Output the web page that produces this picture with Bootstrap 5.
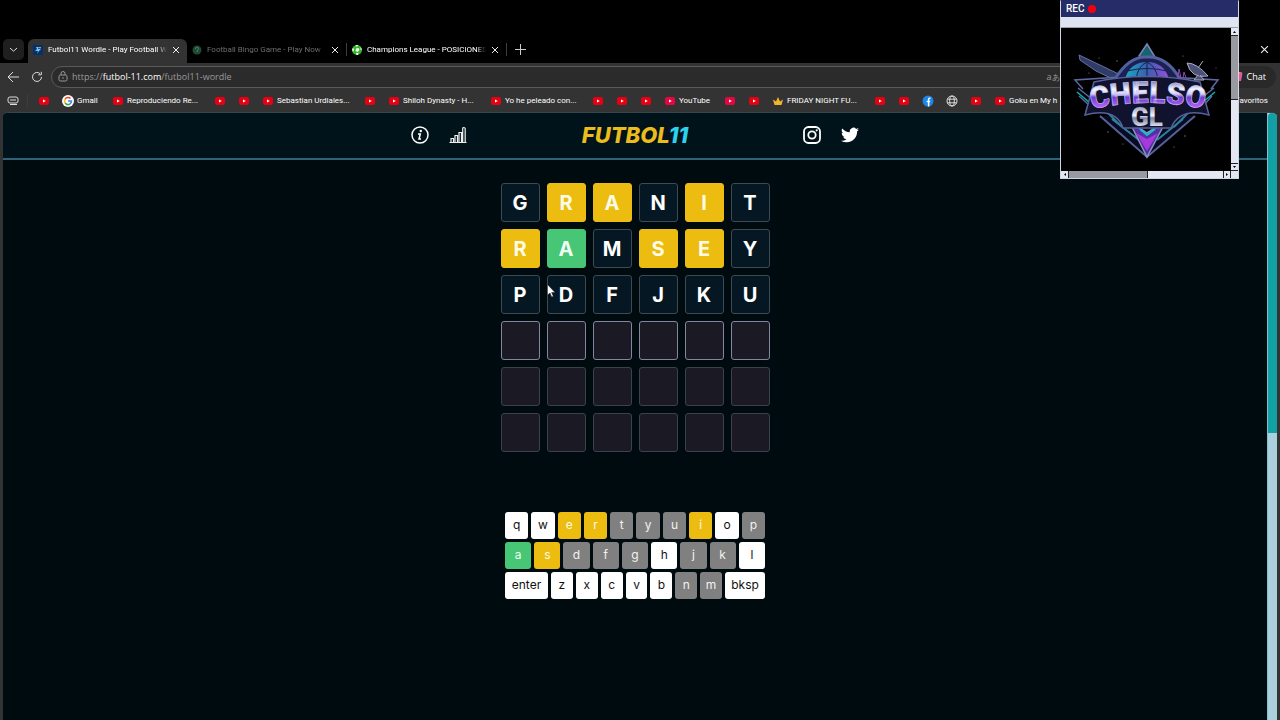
<!DOCTYPE html>
<html lang="en">
<head>
<meta charset="utf-8">
<meta name="viewport" content="width=device-width, initial-scale=1">
<title>Futbol11 Wordle - Play Football Wordle</title>
<link rel="stylesheet" href="https://cdn.jsdelivr.net/npm/bootstrap@5.3.0/dist/css/bootstrap.min.css">
<style>
  body { background: #333; font-family: Roboto, "Open Sans", sans-serif; font-size: 8px; line-height: 14px; color: #fff; }
  svg { display: block; flex: none; }
  a { color: inherit; text-decoration: none; }
  button { color: inherit; }
  .bare { background: none; border: 0; padding: 0; }

  /* browser chrome */
  .tabstrip { background: #000; padding: 39px 11px 0 3px; height: 63px; }
  .tabmenu { width: 21px; height: 21px; border-radius: 5px; background: #1f1f1f; }
  .tab { width: 159px; height: 24px; padding: 0 7px 2px 5px; gap: 5px; }
  .tab-on { background: #333; border-radius: 6px 6px 0 0; }
  .faded .tab-title { color: #6e6e6e; }
  .tab-title { flex: 1 1 0; min-width: 0; overflow: hidden; white-space: nowrap; -webkit-mask-image: linear-gradient(90deg, #000 92%, transparent); mask-image: linear-gradient(90deg, #000 92%, transparent); }
  .split { width: 1px; height: 13px; background: #3d3d3d; }
  .toolbar { height: 27px; padding: 0 4px 0 7px; gap: 12px; }
  .urlbox { height: 22px; border: 1px solid #5a5a5a; border-radius: 11px; background: #2b2b2b; padding: 0 157px 0 6px; gap: 4px; color: #9a9a9a; font-family: "Open Sans", sans-serif; font-size: 9px; margin-left: -4px; }
  .urlbox b { font-weight: 400; color: #fff; }
  .chat { height: 22px; border-radius: 11px; background: #292929; padding: 0 10px 0 8px; gap: 4px; font-family: "Open Sans", sans-serif; font-size: 9px; margin-left: -6px; }
  .marks { height: 22px; padding: 0 12px 1px 7px; white-space: nowrap; }
  .marks a { height: 20px; padding: 0 6px; gap: 3px; display: flex; align-items: center; flex: none; }
  .marks a.named { width: 102px; padding-right: 0; }
  .marks a.w-gmail { width: 50px; padding-right: 0; }
  .marks a.w-tube { width: 60px; padding-right: 0; }

  /* page */
  .viewport { min-height: 608px; margin: 0 3px; border: 1px solid #39464b; border-width: 1px 0 0; border-radius: 5px 5px 0 0; overflow: hidden; background: #000b10; }
  .site { font-family: Inter, "Open Sans", sans-serif; }
  .topbar { background: #00131b; border-bottom: 2px solid #2f6378; height: 47px; padding-bottom: 2px; }
  .topbar-in { width: 100%; max-width: 448px; }
  .brandname { font: italic 800 22px/30px Inter, "Open Sans", sans-serif; color: #ebbc1c; margin: 0; }
  .brandname span { color: #2bd3ee; }
  .icons { gap: 20px; }
  .scroll { width: 10px; background: #a9d0dc; border-left: 1px solid #7fc4cb; }
  .scroll-thumb { height: 320px; background: #12a0a5; border-radius: 4px 4px 0 0; }

  .board { display: grid; grid-template-columns: repeat(6, 39px); grid-auto-rows: 39px; gap: 7px; margin-top: 23px; }
  .tile { display: flex; align-items: center; justify-content: center; border: 1px solid #3d4a54; border-radius: 3px; background: #051722; color: #fff; font-size: 20px; font-weight: 700; line-height: 24px; }
  .tile.near, .pad .near { background: #ecbc10; border-color: #ecbc10; color: #fffbe6; }
  .tile.hit, .pad .hit { background: #47c675; border-color: #47c675; color: #f0fff4; }
  .tile.now { background: #1b1a24; border-color: #84869f; }
  .tile.later { background: #1b1a24; border-color: #3a424c; }

  .pad { width: 260px; margin-top: 60px; gap: 3px; }
  .keys { gap: 3px; }
  .keys button { flex: 1 1 0; min-width: 0; height: 27px; padding: 0 0 2px; border: 0; border-radius: 3px; background: #fff; color: #111; font-size: 12px; line-height: 18px; }
  .keys .miss { background: #808080; color: #f2f2f2; }
  .keys .k-enter { flex: 0 0 43px; }
  .keys .k-bksp { flex: 0 0 40px; }

  /* floating windows */
  .rec { position: absolute; top: 0; right: 41px; width: 179px; background: #000; border: 1px solid #cfd5e2; border-top-color: #252c68; }
  .rec-title { height: 16px; background: #252c68; padding-left: 5px; gap: 4px; font: 500 10px/14px Roboto, sans-serif; color: #fff; }
  .rec-dot { width: 8px; height: 8px; border-radius: 50%; background: #f10010; }
  .rec-bar { height: 11px; background: #dfe4f0; border-bottom: 1px solid #9aa0ae; }
  .rec-v { width: 7px; background: #e3e7f1; }
  .rec-v i, .rec-h i { background: #999aa1; display: block; }
  .rec-v i { height: 64px; border-bottom: 1px solid #222; }
  .rec-h { height: 7px; background: #e3e7f1; }
  .rec-h i { width: 79px; border-right: 1px solid #222; }
  .pointer { position: absolute; left: 46px; top: 101px; }
</style>
</head>
<body class="d-flex flex-column min-vh-100 position-relative">

<svg width="0" height="0" class="position-absolute" aria-hidden="true">
  <symbol id="yt" viewBox="0 0 12 12"><rect x="1" y="2" width="10" height="8" rx="2" fill="#e60012"/><path d="M5 4.400 7.800 6 5 7.600z" fill="#fff"/></symbol>
  <symbol id="ytm" viewBox="0 0 12 12"><rect x="1" y="2" width="10" height="8" rx="2" fill="#e4063f"/><path d="M5 4.400 7.800 6 5 7.600z" fill="#fff"/></symbol>
  <symbol id="x" viewBox="0 0 8 8"><path d="M1 1 7 7M7 1 1 7" stroke="#eee" stroke-width="1" fill="none"/></symbol>
</svg>

<header>
  <div class="tabstrip d-flex">
    <button class="bare tabmenu d-flex align-items-center justify-content-center me-1" aria-label="Tab menu"><svg width="9" height="9" viewBox="0 0 9 9"><path d="M1 3 4.500 6.200 8 3" fill="none" stroke="#ddd"/></svg></button>
    <div class="tab tab-on d-flex align-items-center">
      <svg width="10" height="10" viewBox="0 0 10 10"><rect width="10" height="10" fill="#07306b"/><path d="M3 2h3L5 4h3L6 6 4 9 5 6H2l2-2z" fill="#6ec6f2"/><path d="M6 2h2L7 4z" fill="#f3c92b"/></svg>
      <span class="tab-title">Futbol11 Wordle - Play Football W</span>
      <button class="bare" aria-label="Close tab"><svg width="8" height="8"><use href="#x"/></svg></button>
    </div>
    <div class="tab faded d-flex align-items-center">
      <svg width="10" height="10" viewBox="0 0 10 10"><circle cx="5" cy="5" r="4.500" fill="#1d4a30"/><path d="M3.500 4a1.500 1.500 0 1 1 2 1.300L5 7" stroke="#5c8069" fill="none"/></svg>
      <span class="tab-title">Football Bingo Game - Play Now</span>
      <button class="bare" aria-label="Close tab"><svg width="8" height="8"><use href="#x"/></svg></button>
    </div>
    <span class="split mt-1"></span>
    <div class="tab d-flex align-items-center">
      <svg width="10" height="10" viewBox="0 0 10 10"><circle cx="5" cy="5" r="5" fill="#35b52b"/><path d="M4 3.500 6.500 3 7.500 5 5.500 7 3.500 6zM4 0l2 0-.5 1.500-2 0zM0 4l1.500-1 .5 2-1 2zM8.500 2 10 4.500 8.500 5zM4 8l2.500 0L6 10 4.500 10z" fill="#f4fff2"/></svg>
      <span class="tab-title">Champions League - POSICIONES,</span>
      <button class="bare" aria-label="Close tab"><svg width="8" height="8"><use href="#x"/></svg></button>
    </div>
    <span class="split mt-1"></span>
    <button class="bare ms-2 pb-1" aria-label="New tab"><svg width="11" height="11" viewBox="0 0 11 11"><path d="M5.500 0v11M0 5.500h11" stroke="#ccc"/></svg></button>
    <button class="bare ms-auto pb-1" aria-label="Close window"><svg width="9" height="9"><use href="#x"/></svg></button>
  </div>

  <div class="toolbar d-flex align-items-center">
    <button class="bare" aria-label="Back"><svg width="12" height="12" viewBox="0 0 12 12"><path d="M6 1 1 6l5 5M1 6h11" fill="none" stroke="#ddd"/></svg></button>
    <button class="bare" aria-label="Reload"><svg width="12" height="12" viewBox="0 0 12 12"><path d="M10.500 6A4.500 4.500 0 1 1 9 2.600M10.300.8v3H7.300" fill="none" stroke="#ddd"/></svg></button>
    <div class="urlbox d-flex align-items-center flex-grow-1">
      <svg width="10" height="11" viewBox="0 0 10 11"><rect x="1" y="4" width="8" height="6" rx="1.500" fill="none" stroke="#999"/><path d="M3 4V2.500a2 2 0 0 1 4 0V4" fill="none" stroke="#999"/><circle cx="5" cy="7" r=".8" fill="#999"/></svg>
      <a href="#" class="flex-grow-1">https://<b>futbol-11.com</b>/futbol11-wordle</a>
      <span>a<small>あ</small></span>
    </div>
    <button class="bare chat d-flex align-items-center">
      <svg width="11" height="11" viewBox="0 0 11 11"><path d="M3 1h3L4 10H1Q0 10 1 6z" fill="#2b8df0"/><path d="M6 1h3q2 0 1 4L9 10H5z" fill="#e05a9b"/><path d="M4 5 6 1l2 0-3 9H3z" fill="#f49a4b"/></svg>Chat</button>
  </div>

  <nav class="marks d-flex align-items-center overflow-hidden" aria-label="Favorites">
    <svg width="12" height="10" viewBox="0 0 12 10"><rect x="1" y="1" width="10" height="6" rx="2" fill="none" stroke="#ddd"/><path d="M3 4h6M3 8.500h7" stroke="#ddd"/></svg>
    <span class="split ms-2 me-1"></span>
    <a href="#" aria-label="Video"><svg width="12" height="12"><use href="#yt"/></svg></a>
    <a href="#" class="w-gmail"><svg width="12" height="12" viewBox="0 0 12 12"><circle cx="6" cy="6" r="6" fill="#fff"/><g fill="none" stroke-width="1.600"><path d="M3.200 4A3.500 3.500 0 0 1 8.500 3.500" stroke="#ea4335"/><path d="M3.200 4a3.500 3.500 0 0 0 0 4" stroke="#fbbc05"/><path d="M3.200 8A3.500 3.500 0 0 0 8 8.900" stroke="#34a853"/><path d="M6 6h3.500Q9.500 8 8 8.900" stroke="#4285f4"/></g></svg>Gmail</a>
    <a href="#" class="named"><svg width="12" height="12"><use href="#yt"/></svg>Reproduciendo Re...</a>
    <a href="#" aria-label="Video"><svg width="12" height="12"><use href="#yt"/></svg></a>
    <a href="#" aria-label="Video"><svg width="12" height="12"><use href="#yt"/></svg></a>
    <a href="#" class="named"><svg width="12" height="12"><use href="#yt"/></svg>Sebastian Urdiales...</a>
    <a href="#" aria-label="Video"><svg width="12" height="12"><use href="#yt"/></svg></a>
    <a href="#" class="named"><svg width="12" height="12"><use href="#yt"/></svg>Shiloh Dynasty - H...</a>
    <a href="#" class="named"><svg width="12" height="12"><use href="#yt"/></svg>Yo he peleado con...</a>
    <a href="#" aria-label="Video"><svg width="12" height="12"><use href="#yt"/></svg></a>
    <a href="#" aria-label="Video"><svg width="12" height="12"><use href="#yt"/></svg></a>
    <a href="#" aria-label="Video"><svg width="12" height="12"><use href="#yt"/></svg></a>
    <a href="#" class="w-tube"><svg width="12" height="12"><use href="#ytm"/></svg>YouTube</a>
    <a href="#" aria-label="Video"><svg width="12" height="12"><use href="#ytm"/></svg></a>
    <a href="#" aria-label="Video"><svg width="12" height="12"><use href="#yt"/></svg></a>
    <a href="#" class="named"><svg width="12" height="12" viewBox="0 0 12 12"><path d="M1 4.500 4 6.500 6 2l2 4.500 3-2L9.500 10h-7z" fill="#efb52c"/></svg>FRIDAY NIGHT FU...</a>
    <a href="#" aria-label="Video"><svg width="12" height="12"><use href="#yt"/></svg></a>
    <a href="#" aria-label="Video"><svg width="12" height="12"><use href="#yt"/></svg></a>
    <a href="#" aria-label="Facebook"><svg width="12" height="12" viewBox="0 0 12 12"><circle cx="6" cy="6" r="5.500" fill="#1b86ea"/><path d="M8.500 3.200H7.600Q6.600 3.200 6.600 4.300V11.500M4.600 6.400h3.600" stroke="#fff" stroke-width="1.500" fill="none"/></svg></a>
    <a href="#" aria-label="Site"><svg width="12" height="12" viewBox="0 0 12 12"><g fill="none" stroke="#ddd"><circle cx="6" cy="6" r="5"/><ellipse cx="6" cy="6" rx="2.300" ry="5"/><path d="M1.500 4.200h9M1.500 7.800h9"/></g></svg></a>
    <a href="#" aria-label="Video"><svg width="12" height="12"><use href="#yt"/></svg></a>
    <a href="#" class="named"><svg width="12" height="12"><use href="#yt"/></svg>Goku en My h</a>
    <a href="#" class="ms-auto p-0">favoritos</a>
  </nav>
</header>

<div class="viewport d-flex flex-grow-1">
  <main class="site flex-grow-1 d-flex flex-column align-items-center">
    <div class="topbar w-100 d-flex justify-content-center">
      <div class="topbar-in d-flex align-items-center justify-content-between">
        <div class="icons d-flex">
          <button class="bare" aria-label="How to play"><svg width="18" height="18" viewBox="0 0 18 18"><circle cx="9" cy="9" r="8" fill="none" stroke="#fff" stroke-width="1.500"/><path d="M7 8h2.300L8 13h2" fill="none" stroke="#fff" stroke-width="1.500"/><circle cx="9.800" cy="5" r="1.200" fill="#fff"/></svg></button>
          <button class="bare" aria-label="Statistics"><svg width="18" height="18" viewBox="0 0 18 18"><path d="M.5 16.500h17M2 16v-3.500h2.500V16M6 16V9.500h2.500V16M10 16V6.500h2.500V16M13.700 16V2.500q0-1 1.200-1t1.300 1V16" fill="none" stroke="#eee" stroke-width="1.200"/></svg></button>
        </div>
        <h1 class="brandname">FUTBOL<span>11</span></h1>
        <div class="icons d-flex">
          <a href="#" aria-label="Instagram"><svg width="18" height="18" viewBox="0 0 18 18"><g fill="none" stroke="#fff" stroke-width="1.800"><rect x="1" y="1" width="16" height="16" rx="4.500"/><circle cx="9" cy="9" r="3.700"/></g><circle cx="13.700" cy="4.300" r="1.100" fill="#fff"/></svg></a>
          <a href="#" aria-label="Twitter"><svg width="18" height="18" viewBox="0 0 24 24"><path fill="#fff" d="M24 4.600a10 10 0 0 1-2.800.8 5 5 0 0 0 2.100-2.700 10 10 0 0 1-3.100 1.200 4.900 4.900 0 0 0-8.400 4.500A14 14 0 0 1 1.700 3.200a4.900 4.900 0 0 0 1.500 6.500 4.900 4.900 0 0 1-2.200-.6v.1a4.900 4.900 0 0 0 3.900 4.800 5 5 0 0 1-2.200.1 4.900 4.900 0 0 0 4.600 3.400A9.900 9.900 0 0 1 0 19.500a14 14 0 0 0 7.500 2.200c9.100 0 14-7.500 14-14v-.6A10 10 0 0 0 24 4.600z"/></svg></a>
        </div>
      </div>
    </div>

    <div class="board position-relative">
      <div class="tile">G</div><div class="tile near">R</div><div class="tile near">A</div><div class="tile">N</div><div class="tile near">I</div><div class="tile">T</div>
      <div class="tile near">R</div><div class="tile hit">A</div><div class="tile">M</div><div class="tile near">S</div><div class="tile near">E</div><div class="tile">Y</div>
      <div class="tile">P</div><div class="tile">D</div><div class="tile">F</div><div class="tile">J</div><div class="tile">K</div><div class="tile">U</div>
      <div class="tile now"></div><div class="tile now"></div><div class="tile now"></div><div class="tile now"></div><div class="tile now"></div><div class="tile now"></div>
      <div class="tile later"></div><div class="tile later"></div><div class="tile later"></div><div class="tile later"></div><div class="tile later"></div><div class="tile later"></div>
      <div class="tile later"></div><div class="tile later"></div><div class="tile later"></div><div class="tile later"></div><div class="tile later"></div><div class="tile later"></div>
      <svg class="pointer" width="9" height="14" viewBox="0 0 9 14"><path d="M.5.5v10.500L3 9l1.700 4 1.600-.7L4.600 8.500H8z" fill="#fff" stroke="#222" stroke-width=".5"/></svg>
    </div>

    <div class="pad d-flex flex-column">
      <div class="keys d-flex">
        <button>q</button><button>w</button><button class="near">e</button><button class="near">r</button><button class="miss">t</button><button class="miss">y</button><button class="miss">u</button><button class="near">i</button><button>o</button><button class="miss">p</button>
      </div>
      <div class="keys d-flex">
        <button class="hit">a</button><button class="near">s</button><button class="miss">d</button><button class="miss">f</button><button class="miss">g</button><button>h</button><button class="miss">j</button><button class="miss">k</button><button>l</button>
      </div>
      <div class="keys d-flex">
        <button class="k-enter">enter</button><button>z</button><button>x</button><button>c</button><button>v</button><button>b</button><button class="miss">n</button><button class="miss">m</button><button class="k-bksp">bksp</button>
      </div>
    </div>
  </main>
  <div class="scroll"><div class="scroll-thumb"></div></div>
</div>

<aside class="rec">
  <div class="rec-title d-flex align-items-center">REC <span class="rec-dot"></span></div>
  <div class="rec-bar"></div>
  <div class="d-flex">
    <svg class="flex-grow-1" height="143" viewBox="0 0 170 143" role="img" aria-label="Chelso GL">
      <defs>
        <linearGradient id="chrome" gradientUnits="userSpaceOnUse" x1="0" y1="50" x2="0" y2="82"><stop offset=".1" stop-color="#7880b0"/><stop offset=".35" stop-color="#f6f6ff"/><stop offset=".5" stop-color="#d5cff5"/><stop offset=".6" stop-color="#6a3fd0"/><stop offset=".9" stop-color="#bb5cfa"/></linearGradient>
        <linearGradient id="steel" gradientUnits="userSpaceOnUse" x1="0" y1="78" x2="0" y2="99"><stop offset="0" stop-color="#8f94b0"/><stop offset=".45" stop-color="#f6f6ff"/><stop offset=".58" stop-color="#83879f"/><stop offset="1" stop-color="#e6e8f4"/></linearGradient>
        <linearGradient id="dome" x1="0" y1="0" x2="1" y2="0"><stop offset="0" stop-color="#1baac6"/><stop offset=".5" stop-color="#385fae"/><stop offset="1" stop-color="#9a4de0"/></linearGradient>
        <path id="arch" d="M27 82Q87 68 147 82"/>
      </defs>
      <g fill="#78859e"><circle cx="38" cy="30" r=".6"/><circle cx="56" cy="33" r=".7"/><circle cx="122" cy="28" r=".6"/><circle cx="132" cy="37" r=".8"/><circle cx="28" cy="45" r=".6"/><circle cx="155" cy="40" r=".5"/><circle cx="47" cy="104" r=".7"/><circle cx="62" cy="116" r=".6"/><circle cx="124" cy="108" r=".7"/><circle cx="113" cy="119" r=".6"/><circle cx="44" cy="40" r=".8"/></g>
      <path d="M18 27 64 49 56 53 35 43 19 32z" fill="#303c68" stroke="#66709c"/>
      <path d="M22 61 14 52 60 49M150 61 157 52 108 49M17 60 32 72M153 60 138 72M18 68 28 77M151 68 143 77" fill="none" stroke="#5c69a3" stroke-width="1.500"/>
      <path d="M16 64 29 75M154 64 141 75" stroke="#00b4bb" stroke-width="1.500"/>
      <path d="M78 28 86 16l8 13-4 6-8 0z" fill="#16646f" stroke="#7e83b3" stroke-width="1.500"/>
      <path d="M54 51Q68 28 86 29 106 28 119 51" fill="#1c2153" stroke="#5361a0" stroke-width="3"/>
      <path d="M64 51q5-17 22-17 17 0 22 17z" fill="url(#dome)"/>
      <path d="M66 43q20-5 40 0M75 51q2-13 11-17M86 34v17M97 51q-2-13-11-17" fill="none" stroke="#152347"/>
      <path d="M117 50l1-9 2 9M122 50l1-6 2 6" stroke="#8b49bd" fill="none"/>
      <path d="M126 35q10 0 21 13-17 3-21-13zM137 40l5-7M137 47l-4 5h10l-4-5" fill="#4b5275" stroke="#a7aacb"/>
      <path d="M39 88 86 129 134 88" fill="#070b23" stroke="#56629a" stroke-width="2"/>
      <path d="M51 91 78 112M122 91 96 112M45 83l16 16M129 83l-16 16" stroke="#317f98" stroke-width="2"/>
      <path d="M68 93 86 129 105 93 86 105z" fill="#5031a6" stroke="#8b91bd" stroke-width="1.500"/>
      <path d="M75 105l11 18 11-18-11 6z" fill="#a638dc"/><path d="M79 101l7 6 8-6" stroke="#1db9c9" stroke-width="2" fill="none"/>
      <path d="M33 54Q86 43 139 54l9 33Q119 79 110 100H62Q55 79 24 87z" fill="#10122e" stroke="#56619b" stroke-width="1.500"/>
      <text font-family="Roboto, 'Liberation Sans', sans-serif" font-weight="900" font-size="30" fill="url(#chrome)" stroke="#c9c8f6" stroke-width=".6" text-anchor="middle"><textPath href="#arch" startOffset="50%">CHELSO</textPath></text>
      <text x="86" y="98" font-family="Roboto, 'Liberation Sans', sans-serif" font-weight="900" font-size="26" fill="url(#steel)" text-anchor="middle">GL</text>
    </svg>
    <div class="rec-v d-flex flex-column justify-content-between">
      <svg width="7" height="8" viewBox="0 0 7 8"><path d="M2 5h3L3.500 3z"/><path d="M0 7.500h7" stroke="#222"/></svg>
      <i class="mb-auto"></i>
      <svg width="7" height="8" viewBox="0 0 7 8"><path d="M2 3h3L3.500 5z"/><path d="M0 .5h7M0 7.500h7" stroke="#222"/></svg>
    </div>
  </div>
  <div class="rec-h d-flex">
    <svg width="8" height="7" viewBox="0 0 8 7"><path d="M5 2v3L3 3.500z"/><path d="M7.500 0v7" stroke="#222"/></svg>
    <i></i>
    <svg class="ms-auto" width="15" height="7" viewBox="0 0 15 7"><path d="M3 2v3l2-1.500z"/><path d="M.5 0v7M7.500 0v7" stroke="#222"/></svg>
  </div>
</aside>

<script src="https://cdn.jsdelivr.net/npm/bootstrap@5.3.0/dist/js/bootstrap.bundle.min.js"></script>
</body>
</html>
